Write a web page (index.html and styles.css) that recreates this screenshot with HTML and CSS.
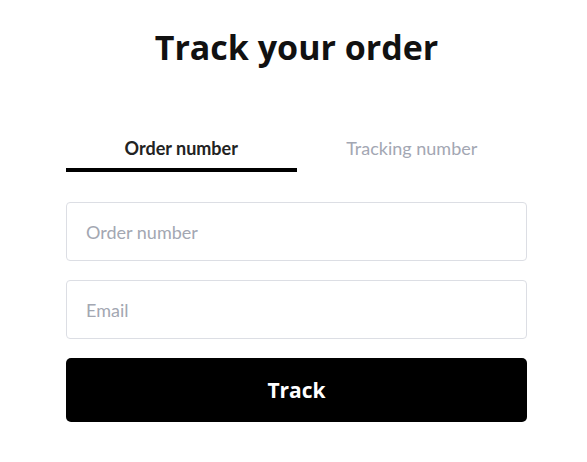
FILE: index.html
```html
<!DOCTYPE html>
<html lang="en">
<head>
    <meta charset="UTF-8">
    <meta name="viewport" content="width=device-width, initial-scale=1.0">
    <title>Track your order</title>
    <link rel="stylesheet" href="styles.css">
</head>
<body>
    <div class="container">
        <h1>Track your order</h1>

        <div class="tabs">
            <button type="button" class="tab active">Order number</button>
            <button type="button" class="tab">Tracking number</button>
        </div>

        <form class="track-form">
            <input type="text" placeholder="Order number">
            <input type="email" placeholder="Email">
            <button type="submit" class="track-btn">Track</button>
        </form>
    </div>
</body>
</html>
```

FILE: styles.css
```css
body {
    margin: 0;
    padding: 0;
    background-color: #fff;
    font-family: Lato, "Open Sans", sans-serif;
}
.container {
    width: 461px;
    margin: 0 0 0 66px;
    padding-top: 24px;
}
h1 {
    margin: 0;
    font-family: "Open Sans", sans-serif;
    font-weight: 700;
    font-size: 34px;
    line-height: 46px;
    color: #111;
    text-align: center;
}
.tabs {
    display: flex;
    margin-top: 67px;
}
.tab {
    flex: 1;
    padding: 0 0 9px;
    border: none;
    border-bottom: 4px solid transparent;
    background: none;
    font-family: Lato, sans-serif;
    font-size: 18px;
    line-height: 22px;
    color: #a3a7b3;
    cursor: pointer;
}
.tab.active {
    font-weight: 700;
    color: #222;
    border-bottom-color: #000;
}
.track-form {
    display: flex;
    flex-direction: column;
    gap: 19px;
    margin-top: 30px;
}
.track-form input {
    height: 59px;
    padding: 0 19px;
    border: 1px solid #dcdee4;
    border-radius: 4px;
    font-family: Lato, sans-serif;
    font-size: 18px;
    color: #222;
    box-sizing: border-box;
    outline: none;
}
.track-form input::placeholder {
    color: #a3a7b2;
}
.track-btn {
    height: 64px;
    border: none;
    border-radius: 5px;
    background-color: #000;
    color: #fff;
    font-family: "Open Sans", sans-serif;
    font-weight: 700;
    font-size: 21px;
    cursor: pointer;
}
```
